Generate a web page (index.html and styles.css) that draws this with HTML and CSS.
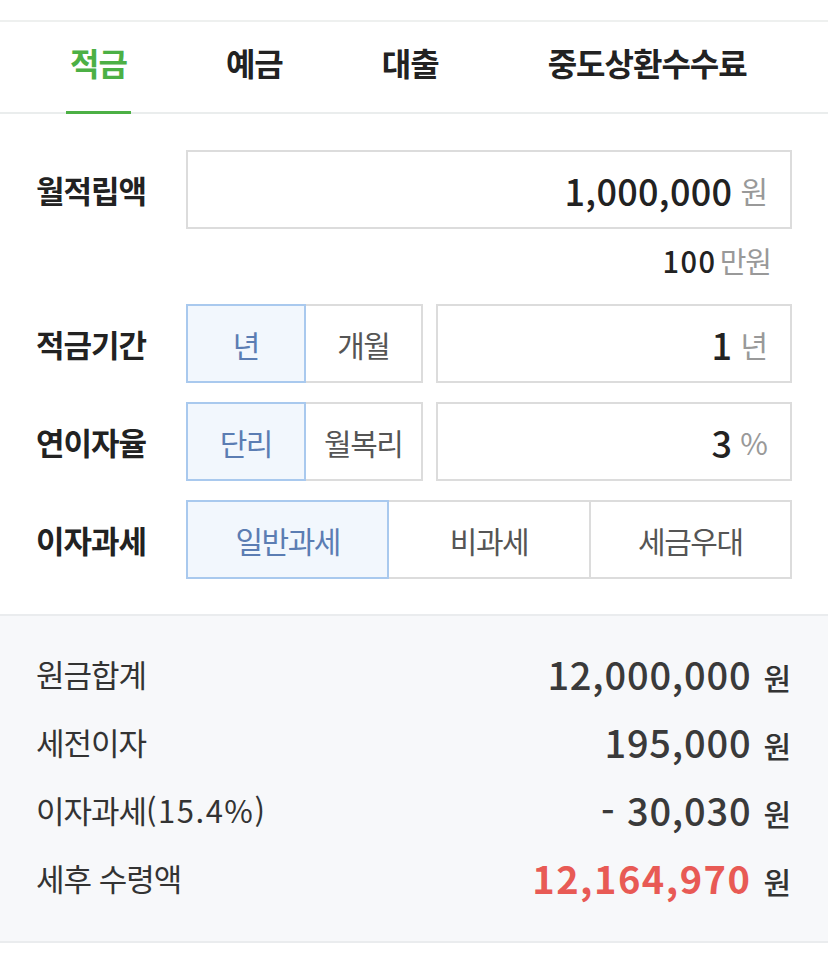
FILE: index.html
```html
<!DOCTYPE html>
<html lang="ko">
<head>
<meta charset="utf-8">
<link rel="stylesheet" href="styles.css">
</head>
<body>
<div class="page">
  <nav class="tabs">
    <div class="tab active">적금</div>
    <div class="tab">예금</div>
    <div class="tab">대출</div>
    <div class="tab wide">중도상환수수료</div>
  </nav>

  <section class="form">
    <div class="row">
      <div class="label">월적립액</div>
      <div class="field">
        <div class="input big"><span class="val">1,000,000</span><span class="unit">원</span></div>
        <div class="hint"><span class="val">100</span><span class="unit">만원</span></div>
      </div>
    </div>
    <div class="row">
      <div class="label">적금기간</div>
      <div class="field inline">
        <div class="seg two">
          <div class="opt on">년</div>
          <div class="opt">개월</div>
        </div>
        <div class="input"><span class="val">1</span><span class="unit">년</span></div>
      </div>
    </div>
    <div class="row">
      <div class="label">연이자율</div>
      <div class="field inline">
        <div class="seg two">
          <div class="opt on">단리</div>
          <div class="opt">월복리</div>
        </div>
        <div class="input"><span class="val">3</span><span class="unit">%</span></div>
      </div>
    </div>
    <div class="row">
      <div class="label">이자과세</div>
      <div class="field">
        <div class="seg three">
          <div class="opt on">일반과세</div>
          <div class="opt">비과세</div>
          <div class="opt">세금우대</div>
        </div>
      </div>
    </div>
  </section>

  <section class="result">
    <div class="rrow"><span class="rlabel">원금합계</span><span class="rval"><b>12,000,000</b><i>원</i></span></div>
    <div class="rrow"><span class="rlabel">세전이자</span><span class="rval"><b>195,000</b><i>원</i></span></div>
    <div class="rrow"><span class="rlabel">이자과세<span class="rate">(15.4%)</span></span><span class="rval"><b>- 30,030</b><i>원</i></span></div>
    <div class="rrow"><span class="rlabel">세후 수령액</span><span class="rval"><b class="red">12,164,970</b><i>원</i></span></div>
  </section>
</div>
</body>
</html>
```

FILE: styles.css
```css
* { box-sizing: border-box; }
html, body { margin: 0; padding: 0; background: #fff; }
body {
  font-family: "Noto Sans CJK KR", "Noto Sans", sans-serif;
  color: #222;
}
.page { padding-top: 20px; }

.tabs {
  display: flex;
  border-top: 2px solid #eef0ef;
  border-bottom: 2px solid #eaeded;
  height: 94px;
  padding-left: 66px;
  gap: 91px;
}
.tab {
  padding: 0 4px 12px;
  font-size: 32px;
  font-weight: 700;
  color: #222;
  display: flex;
  align-items: center;
  letter-spacing: -1px;
  margin-bottom: -2px;
}
.tab.active { color: #4cb045; border-bottom: 3px solid #4cb045; padding-bottom: 9px; }
.tab.wide { margin-left: 10px; }

.form { padding: 36px 36px 35px 36px; }
.row { display: flex; align-items: flex-start; margin-bottom: 19px; }
.row:last-child { margin-bottom: 0; }
.label {
  width: 150px;
  height: 79px;
  display: flex;
  align-items: center;
  font-size: 31px;
  font-weight: 700;
  color: #222;
  letter-spacing: -1px;
}
.field { flex: 1; }
.field.inline { display: flex; gap: 13px; }

.input {
  flex: 1;
  height: 79px;
  border: 2px solid #dcdcdc;
  display: flex;
  align-items: center;
  justify-content: flex-end;
  padding-right: 22px;
  background: #fff;
}
.input .val { font-size: 36px; font-weight: 500; color: #222; letter-spacing: 0.3px; }
.input .unit { font-size: 30px; color: #999; margin-left: 8px; }
.input.big { width: 100%; }

.hint {
  height: 62px;
  display: flex;
  align-items: center;
  justify-content: flex-end;
  padding-right: 21px;
  margin-bottom: -6px;
}
.hint .val { font-size: 29px; font-weight: 500; color: #222; letter-spacing: 1.5px; }
.hint .unit { font-size: 29px; color: #999; margin-left: 3px; letter-spacing: -1px; }

.seg { display: flex; height: 79px; }
.seg.two { width: 237px; }
.seg.three { width: 100%; }
.opt {
  flex: 1;
  display: flex;
  align-items: center;
  justify-content: center;
  border: 2px solid #dcdcdc;
  margin-left: -2px;
  font-size: 30px;
  color: #555;
  background: #fff;
  letter-spacing: -1.5px;
}
.opt:first-child { margin-left: 0; }
.opt.on {
  background: #f2f7fd;
  border-color: #a9c9ee;
  color: #5b7db3;
  position: relative;
  z-index: 1;
}

.result {
  background: #f7f8fa;
  border-top: 2px solid #eaecee;
  border-bottom: 2px solid #eaecee;
  padding: 23px 37px 30px 36px;
}
.rrow {
  display: flex;
  justify-content: space-between;
  align-items: center;
  height: 68px;
}
.rlabel { font-size: 31px; color: #333; letter-spacing: -1px; }
.rlabel .rate { letter-spacing: 1.5px; }
.rval { display: flex; align-items: baseline; }
.rval b { font-size: 38px; font-weight: 500; color: #3a3a3a; letter-spacing: 0.8px; }
.rval b.red { color: #e85a55; font-weight: 700; letter-spacing: 1.5px; }
.rval i { font-style: normal; font-size: 30px; color: #333; margin-left: 12px; font-weight: 500; }
```
